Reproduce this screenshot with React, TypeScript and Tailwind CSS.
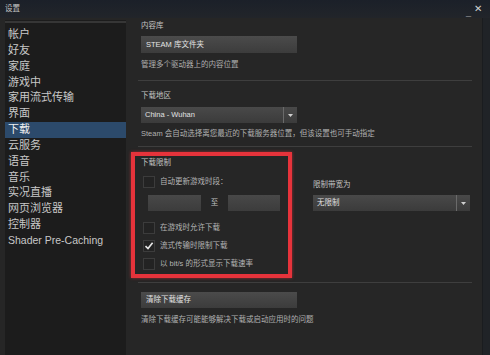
import React from "react"

const sidebarItems = [
  "帐户",
  "好友",
  "家庭",
  "游戏中",
  "家用流式传输",
  "界面",
  "下载",
  "云服务",
  "语音",
  "音乐",
  "实况直播",
  "网页浏览器",
  "控制器",
  "Shader Pre-Caching",
]

function Checkbox({ checked, label }: { checked?: boolean; label: string }) {
  return (
    <div className="flex items-center h-[12px]">
      <div className="w-[12px] h-[12px] bg-[#232323] border border-[#3c3c3c] flex items-center justify-center ml-[2px]">
        {checked && (
          <svg width="10" height="10" viewBox="0 0 10 10">
            <path d="M1.5 5.2 L4 7.6 L8.6 1.8" stroke="#e8e8e8" strokeWidth="1.6" fill="none" />
          </svg>
        )}
      </div>
      <span className="ml-[5px] text-[7.5px] text-[#b4b4b4]">{label}</span>
    </div>
  )
}

function Dropdown({ value, width }: { value: string; width: string }) {
  return (
    <div className={`${width} h-[16px] flex bg-gradient-to-b from-[#494949] to-[#3b3b3b]`}>
      <div className="flex-1 flex items-center pl-[4px] text-[7.5px] text-[#e2e2e2]">{value}</div>
      <div className="w-[14px] border-l border-[#6a6a6a] flex items-center justify-center">
        <svg width="5" height="3" viewBox="0 0 5 3">
          <path d="M0 0 H5 L2.5 3 Z" fill="#d0d0d0" />
        </svg>
      </div>
    </div>
  )
}

export default function App() {
  return (
    <div
      className="w-[490px] h-[355px] bg-[#262626] flex flex-col overflow-hidden"
      style={{ fontFamily: '"Liberation Sans", "Noto Sans CJK SC", sans-serif' }}
    >
      {/* title bar */}
      <div className="h-[18px] bg-gradient-to-b from-[#1b2029] to-[#22252a] flex items-center px-[5px] text-[7.5px] text-[#c6c6c6]">
        <span className="flex-1">设置</span>
        <span className="text-[#9a9a9a] text-[9px] leading-none mt-[6px] mr-[3px]">_</span>
        <span className="text-[#d0d0d0] text-[10px] leading-none mr-[3px]">✕</span>
      </div>

      <div className="flex-1 flex">
        {/* sidebar */}
        <div className="ml-[5px] mt-[2px] w-[121px] bg-[#1c1c1c] flex flex-col">
          <div className="h-[2px] mt-[1px] bg-[#363636]" />
          <div className="pt-[4px] flex flex-col">
            {sidebarItems.map((item) => (
              <div
                key={item}
                className={`h-[15.85px] leading-[15.85px] pl-[3px] ${
                  item === "Shader Pre-Caching" ? "text-[10.5px]" : "text-[11px]"
                } ${item === "下载" ? "bg-[#2c4a6b] text-[#f0f0f0]" : "text-[#c8c8c8]"}`}
              >
                {item}
              </div>
            ))}
          </div>
        </div>

        {/* content */}
        <div className="flex-1 relative pl-[15px] pr-[10px] text-[7.5px] text-[#b0b0b0]">
          <div className="mt-[2px] h-[12px] leading-[12px] text-[#c4c4c4]">内容库</div>
          <div className="mt-[4px] w-[156px] h-[17px] bg-gradient-to-b from-[#4b4b4b] to-[#3c3c3c] flex items-center pl-[5px] text-[#e4e4e4]">
            STEAM 库文件夹
          </div>
          <div className="mt-[6px] h-[12px] leading-[12px]">管理多个驱动器上的内容位置</div>
          <div className="mt-[9px] -ml-[3px] h-px bg-[#3e3e3e]" />

          <div className="mt-[9px] h-[12px] leading-[12px] text-[#c4c4c4]">下载地区</div>
          <div className="mt-[5px]">
            <Dropdown value="China - Wuhan" width="w-[156px]" />
          </div>
          <div className="mt-[5px] h-[12px] leading-[12px]">
            Steam 会自动选择离您最近的下载服务器位置，但该设置也可手动指定
          </div>
          <div className="mt-[6px] -ml-[3px] h-px bg-[#3e3e3e]" />

          <div className="flex">
            <div className="w-[172px] flex flex-col">
              <div className="mt-[10px] h-[12px] leading-[12px] text-[#c4c4c4]">下载限制</div>
              <div className="mt-[7px]">
                <Checkbox label="自动更新游戏时段：" />
              </div>
              <div className="mt-[7px] ml-[7px] flex items-center">
                <div className="w-[53px] h-[16px] bg-gradient-to-b from-[#484848] to-[#3c3c3c]" />
                <span className="w-[27px] text-center text-[#c0c0c0]">至</span>
                <div className="w-[52px] h-[16px] bg-gradient-to-b from-[#484848] to-[#3c3c3c]" />
              </div>
              <div className="mt-[11px]">
                <Checkbox label="在游戏时允许下载" />
              </div>
              <div className="mt-[6px]">
                <Checkbox checked label="流式传输时限制下载" />
              </div>
              <div className="mt-[6px]">
                <Checkbox label="以 bit/s 的形式显示下载速率" />
              </div>
            </div>
            <div className="flex flex-col">
              <div className="mt-[32px] h-[12px] leading-[12px] text-[#c4c4c4]">限制带宽为</div>
              <div className="mt-[4px]">
                <Dropdown value="无限制" width="w-[157px]" />
              </div>
            </div>
          </div>
          <div className="mt-[12px] -ml-[3px] h-px bg-[#3e3e3e]" />

          <div className="mt-[9px] w-[156px] h-[16px] bg-gradient-to-b from-[#4b4b4b] to-[#3c3c3c] flex items-center pl-[5px] text-[#e4e4e4]">
            清除下载缓存
          </div>
          <div className="mt-[6px] h-[12px] leading-[12px]">清除下载缓存可能能够解决下载或启动应用时的问题</div>

          {/* annotation box */}
          <div className="absolute left-[5px] top-[134px] w-[161px] h-[126px] border-[4px] border-[#e6333b] shadow-[0_0_3px_rgba(230,51,59,0.6)]" />
        </div>

        {/* scrollbar strip */}
        <div className="w-[8px] bg-[#202327] border-l border-[#1a1c1f]" />
      </div>
    </div>
  )
}
